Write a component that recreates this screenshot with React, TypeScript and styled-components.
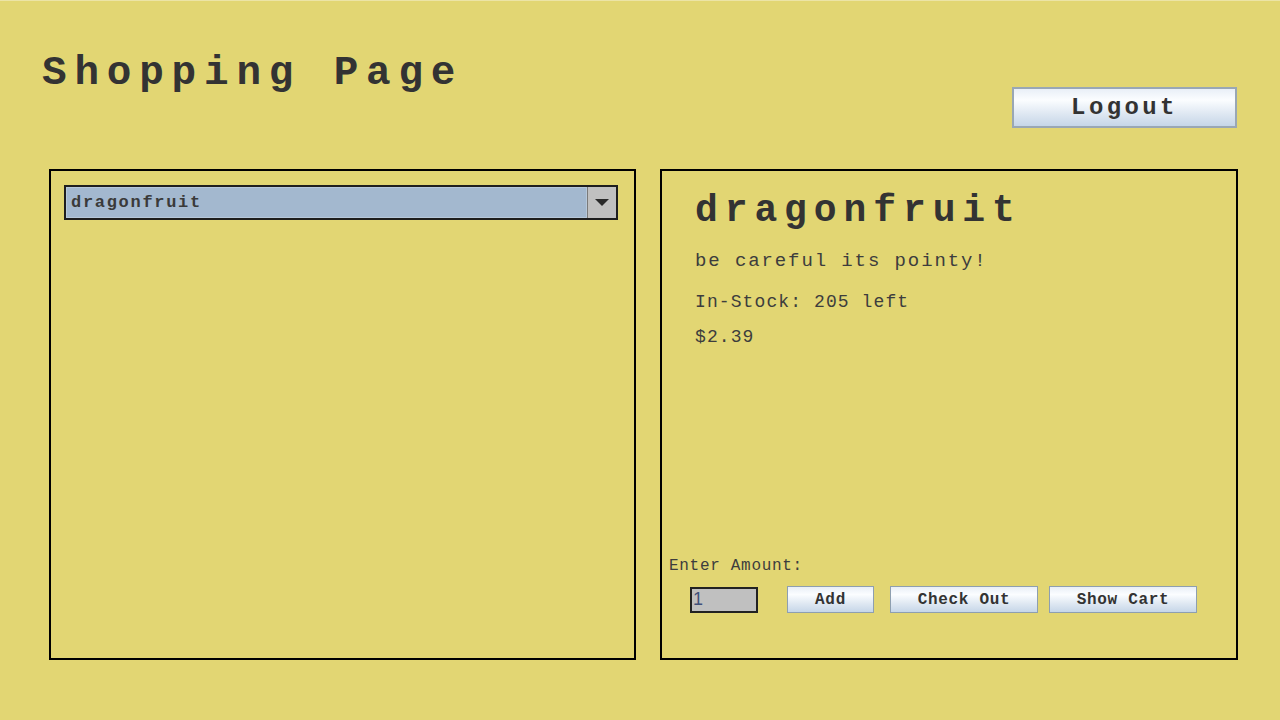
import React from "react";
import styled, { createGlobalStyle } from "styled-components";

const Global = createGlobalStyle`
  html, body { margin: 0; padding: 0; background: #e2d673; }
  body { font-family: "Liberation Mono", "Courier New", monospace; color: #333333; }
`;

const Page = styled.div`
  width: 1280px;
  height: 720px;
  box-sizing: border-box;
  background: #e2d673;
  border-top: 1px solid #ece4a6;
  display: flex;
  flex-direction: column;
`;

const Header = styled.header`
  height: 168px;
  display: flex;
  justify-content: space-between;
  align-items: flex-start;
  padding: 0 43px 0 42px;
`;

const Title = styled.h1`
  margin: 52px 0 0;
  font-size: 41px;
  line-height: 41px;
  letter-spacing: 7.8px;
  font-weight: bold;
  color: #333333;
`;

const Button = styled.button<{ $w: number; $h: number; $size: number; $ls: number }>`
  width: ${(p) => p.$w}px;
  height: ${(p) => p.$h}px;
  box-sizing: border-box;
  border: 1px solid #8e9fb0;
  background: linear-gradient(#e9eff7 0%, #fbfdff 30%, #dce6f1 70%, #c6d6e8 100%);
  font-family: "Liberation Mono", "Courier New", monospace;
  font-weight: bold;
  font-size: ${(p) => p.$size}px;
  letter-spacing: ${(p) => p.$ls}px;
  color: #333333;
  padding: 0;
  display: flex;
  align-items: center;
  justify-content: center;
`;

const LogoutButton = styled(Button)`
  margin-top: 86px;
  border-width: 2px;
  border-color: #99a7b5;
`;

const Panels = styled.main`
  display: flex;
  gap: 24px;
  padding-left: 49px;
`;

const Panel = styled.section<{ $w: number }>`
  width: ${(p) => p.$w}px;
  height: 491px;
  box-sizing: border-box;
  border: 2px solid #000;
`;

const LeftPanel = styled(Panel)`
  padding: 14px 0 0 13px;
`;

const Combo = styled.div`
  width: 554px;
  height: 35px;
  box-sizing: border-box;
  border: 2px solid #1e1e1e;
  display: flex;
`;

const ComboValue = styled.div`
  flex: 1;
  background: #a3b8cf;
  border: 1px solid #b7c8da;
  display: flex;
  align-items: center;
  padding-left: 4px;
  font-weight: bold;
  font-size: 17px;
  letter-spacing: 1.7px;
  color: #3a3a3a;
`;

const ComboArrow = styled.div`
  width: 28px;
  background: #c0c0c0;
  border-left: 1px solid #7a7a7a;
  display: flex;
  align-items: center;
  justify-content: center;
`;

const RightPanel = styled(Panel)`
  display: flex;
  flex-direction: column;
  padding: 0 0 45px 0;
`;

const Info = styled.div`
  padding: 18px 0 0 33px;
`;

const Heading = styled.h2`
  margin: 0;
  font-size: 38px;
  line-height: 44px;
  letter-spacing: 6.9px;
  font-weight: bold;
  color: #333333;
`;

const Line = styled.p<{ $size: number; $ls: number; $mt: number }>`
  margin: ${(p) => p.$mt}px 0 0;
  font-size: ${(p) => p.$size}px;
  line-height: 20px;
  letter-spacing: ${(p) => p.$ls}px;
  color: #3d3d3d;
`;

const Bottom = styled.div`
  margin-top: auto;
  padding-left: 7px;
`;

const AmountLabel = styled.div`
  font-size: 16px;
  line-height: 18px;
  letter-spacing: 0.7px;
  color: #3d3d3d;
`;

const ActionRow = styled.div`
  display: flex;
  align-items: center;
  margin-top: 11px;
  padding-left: 21px;
`;

const AmountInput = styled.div`
  width: 68px;
  height: 26px;
  box-sizing: border-box;
  border: 2px solid #222;
  background: #c0c0c0;
  display: flex;
  align-items: center;
  padding-left: 1px;
  font-family: "Liberation Sans", Arial, sans-serif;
  font-size: 18px;
  color: #40507a;
  margin-right: 29px;
`;

const SmallButton = styled(Button)<{ $ml: number }>`
  margin-left: ${(p) => p.$ml}px;
`;

export default function App() {
  return (
    <>
      <Global />
      <Page>
        <Header>
          <Title>Shopping Page</Title>
          <LogoutButton $w={225} $h={41} $size={24} $ls={3.4}>Logout</LogoutButton>
        </Header>
        <Panels>
          <LeftPanel $w={587}>
            <Combo>
              <ComboValue>dragonfruit</ComboValue>
              <ComboArrow>
                <svg width="14" height="8" viewBox="0 0 14 8">
                  <path d="M0 0 H14 L7 7 Z" fill="#2a2a2a" />
                </svg>
              </ComboArrow>
            </Combo>
          </LeftPanel>
          <RightPanel $w={578}>
            <Info>
              <Heading>dragonfruit</Heading>
              <Line $size={19} $ls={1.9} $mt={18}>be careful its pointy!</Line>
              <Line $size={18} $ls={1.1} $mt={21}>In-Stock: 205 left</Line>
              <Line $size={18} $ls={1.1} $mt={15}>$2.39</Line>
            </Info>
            <Bottom>
              <AmountLabel>Enter Amount:</AmountLabel>
              <ActionRow>
                <AmountInput>1</AmountInput>
                <SmallButton $ml={0} $w={87} $h={27} $size={16} $ls={0.7}>Add</SmallButton>
                <SmallButton $ml={16} $w={148} $h={27} $size={16} $ls={0.7}>Check Out</SmallButton>
                <SmallButton $ml={11} $w={148} $h={27} $size={16} $ls={0.7}>Show Cart</SmallButton>
              </ActionRow>
            </Bottom>
          </RightPanel>
        </Panels>
      </Page>
    </>
  );
}
